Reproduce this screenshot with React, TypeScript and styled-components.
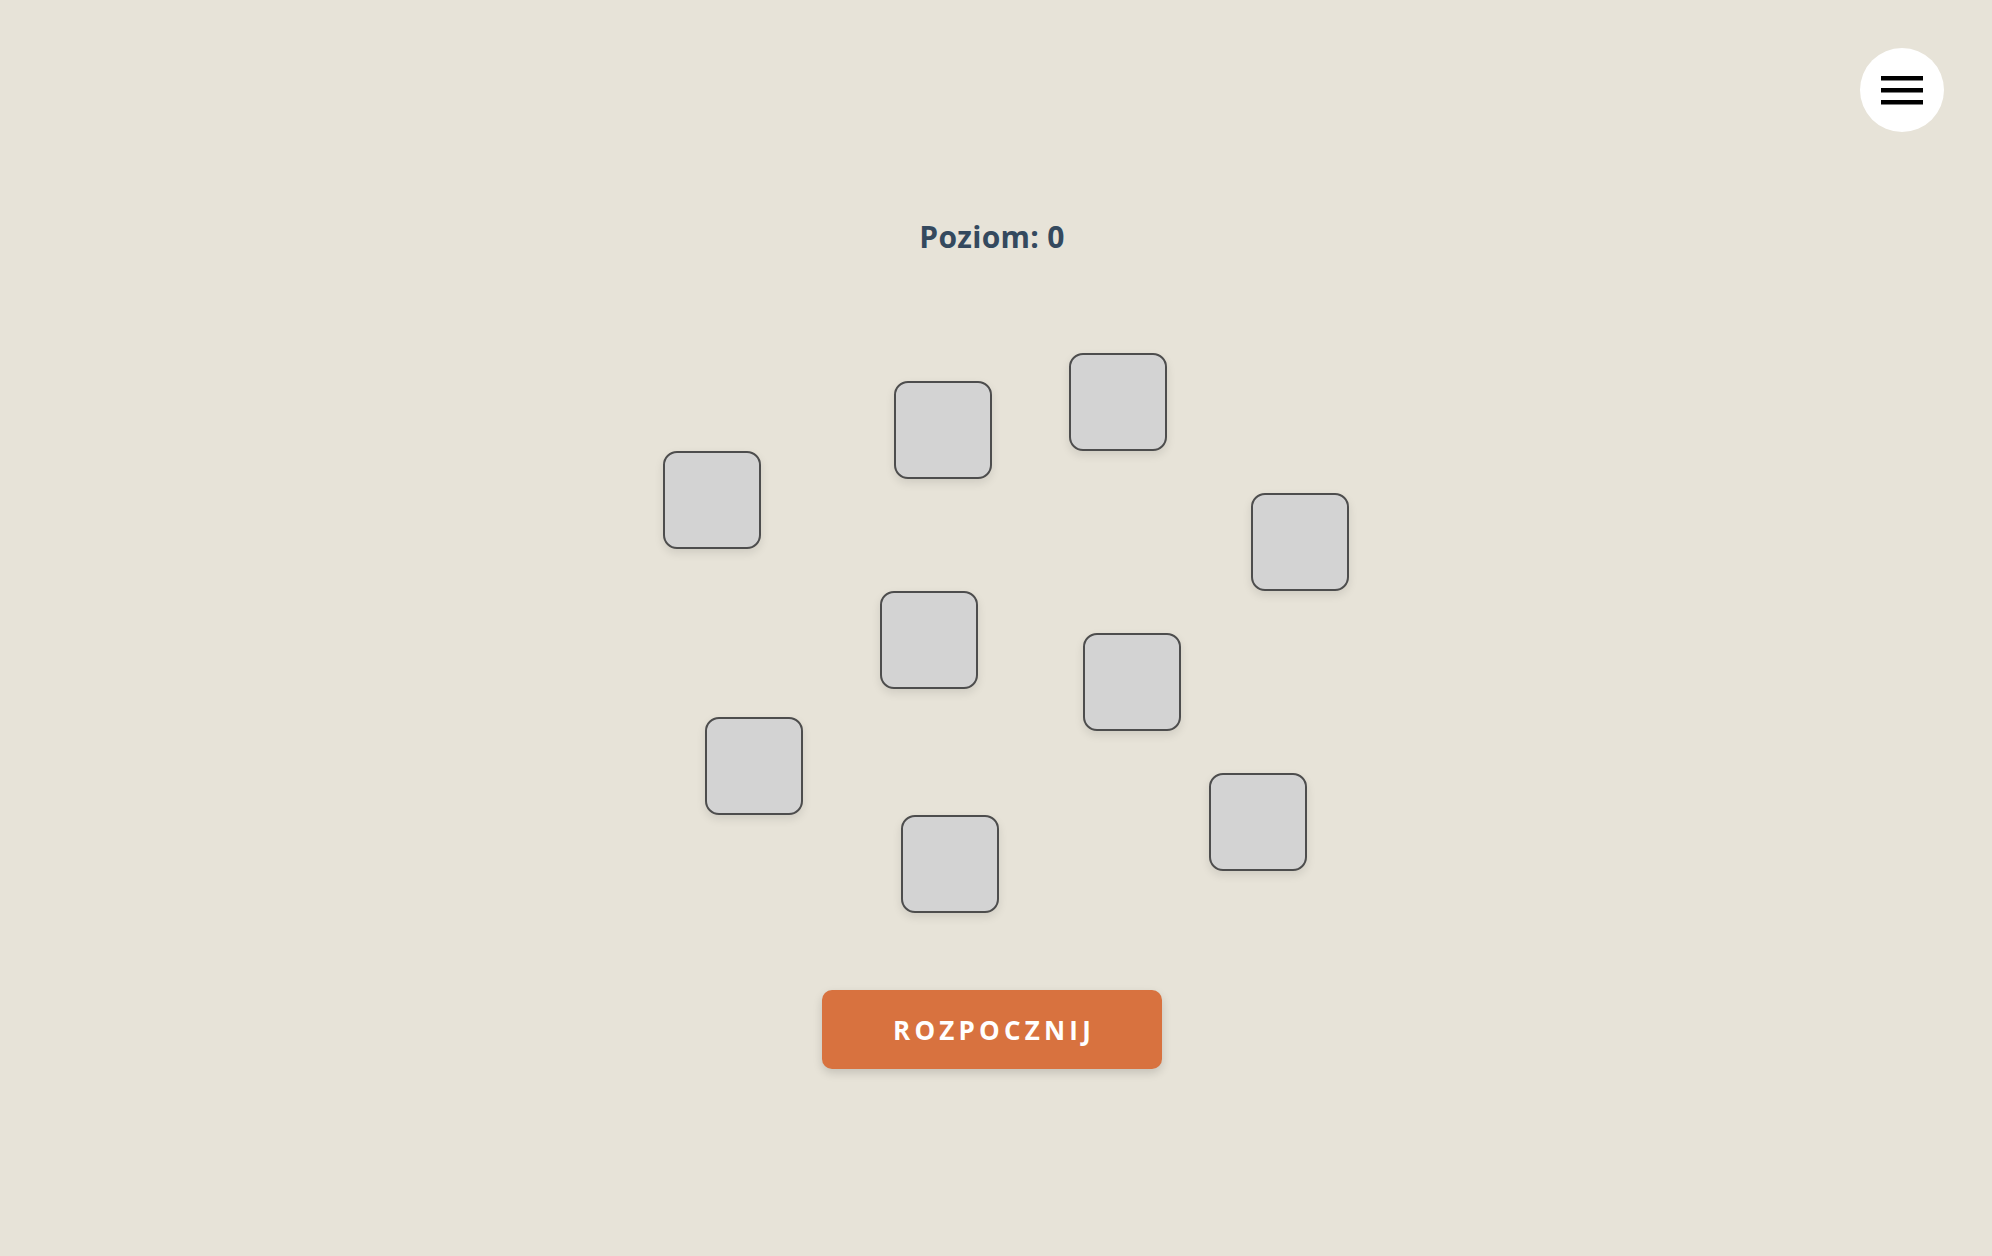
import React from "react";
import styled, { createGlobalStyle } from "styled-components";

const Global = createGlobalStyle`
  html, body {
    margin: 0;
    padding: 0;
    background: #e7e3d8;
    font-family: "Open Sans", "Liberation Sans", sans-serif;
  }
  * { box-sizing: border-box; }
`;

const Page = styled.main`
  min-height: 100vh;
  display: flex;
  flex-direction: column;
  align-items: center;
  padding: 217px 8px 0 0;
`;

const MenuButton = styled.button`
  position: fixed;
  top: 48px;
  right: 48px;
  width: 84px;
  height: 84px;
  border-radius: 50%;
  border: none;
  background: #ffffff;
  display: flex;
  align-items: center;
  justify-content: center;
  padding: 0;
  cursor: pointer;
`;

const Title = styled.h1`
  margin: 0;
  height: 40px;
  line-height: 40px;
  font-size: 30px;
  font-weight: 700;
  color: #34495e;
  letter-spacing: 0.3px;
`;

const Board = styled.div`
  position: relative;
  width: 720px;
  height: 733px;
`;

const Tile = styled.div<{ $x: number; $y: number }>`
  position: absolute;
  left: ${(p) => p.$x}px;
  top: ${(p) => p.$y}px;
  width: 98px;
  height: 98px;
  border-radius: 14px;
  background: #d3d3d3;
  border: 2px solid #4d4d4d;
  box-shadow: 0 4px 10px rgba(0, 0, 0, 0.1);
`;

const StartButton = styled.button`
  width: 340px;
  height: 79px;
  border: none;
  border-radius: 10px;
  background: #d8723f;
  color: #ffffff;
  font-family: "Open Sans", "Liberation Sans", sans-serif;
  font-size: 26px;
  font-weight: 700;
  letter-spacing: 4.2px;
  padding: 0 0 0 4px;
  box-shadow: 0 4px 10px rgba(0, 0, 0, 0.15);
  cursor: pointer;
`;

const tiles: [number, number][] = [
  [31, 194],
  [262, 124],
  [437, 96],
  [619, 236],
  [248, 334],
  [451, 376],
  [73, 460],
  [269, 558],
  [577, 516],
];

export default function App() {
  return (
    <>
      <Global />
      <MenuButton aria-label="Menu">
        <svg width="42" height="29" viewBox="0 0 42 29">
          <rect x="0" y="0" width="42" height="4.5" fill="#000" />
          <rect x="0" y="12" width="42" height="4.5" fill="#000" />
          <rect x="0" y="24" width="42" height="4.5" fill="#000" />
        </svg>
      </MenuButton>
      <Page>
        <Title>Poziom: 0</Title>
        <Board>
          {tiles.map(([x, y], i) => (
            <Tile key={i} $x={x} $y={y} />
          ))}
        </Board>
        <StartButton>ROZPOCZNIJ</StartButton>
      </Page>
    </>
  );
}
